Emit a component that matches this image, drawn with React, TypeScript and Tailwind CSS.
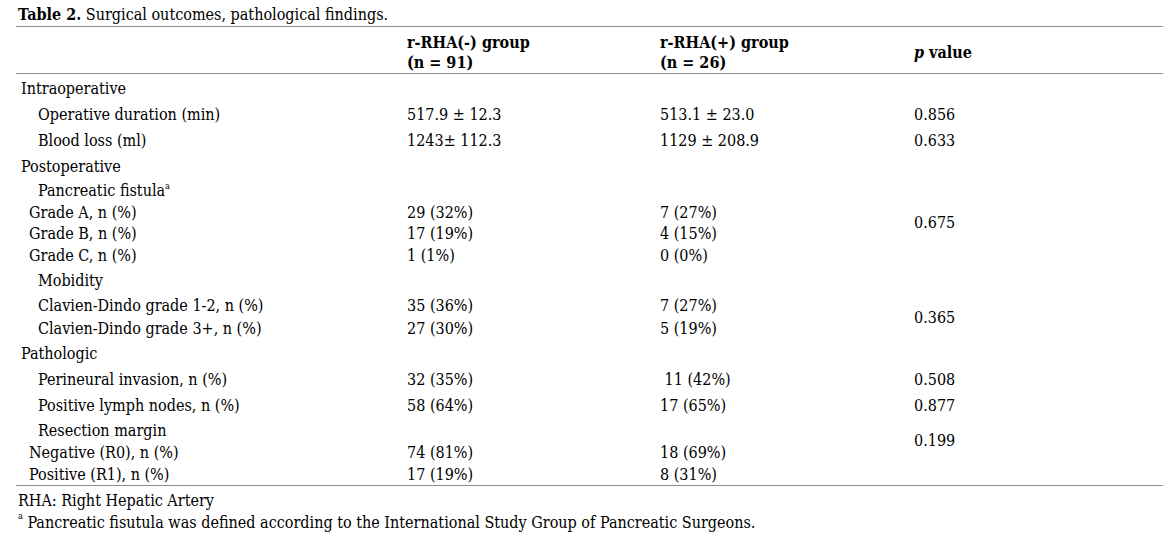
import React from "react";

type Indent = "cat" | "sub" | "grade";

interface Row {
  readonly label: React.ReactNode;
  readonly indent: Indent;
  readonly a?: string;
  readonly b?: string;
  readonly p?: string;
  readonly span?: boolean;
  readonly covered?: boolean;
}

const rows: Row[] = [
  { label: "Intraoperative", indent: "cat" },
  { label: "Operative duration (min)", indent: "sub", a: "517.9 ± 12.3", b: "513.1 ± 23.0", p: "0.856" },
  { label: "Blood loss (ml)", indent: "sub", a: "1243± 112.3", b: "1129 ± 208.9", p: "0.633" },
  { label: "Postoperative", indent: "cat" },
  {
    label: (
      <>
        Pancreatic fistula<sup className="text-[9px] align-[5px]">a</sup>
      </>
    ),
    indent: "sub",
  },
  { label: "Grade A, n (%)", indent: "grade", a: "29 (32%)", b: "7 (27%)", p: "0.675", span: true },
  { label: "Grade B, n (%)", indent: "grade", a: "17 (19%)", b: "4 (15%)", covered: true },
  { label: "Grade C, n (%)", indent: "grade", a: "1 (1%)", b: "0 (0%)" },
  { label: "Mobidity", indent: "sub" },
  { label: "Clavien-Dindo grade 1-2, n (%)", indent: "sub", a: "35 (36%)", b: "7 (27%)", p: "0.365", span: true },
  { label: "Clavien-Dindo grade 3+, n (%)", indent: "sub", a: "27 (30%)", b: "5 (19%)", covered: true },
  { label: "Pathologic", indent: "cat" },
  { label: "Perineural invasion, n (%)", indent: "sub", a: "32 (35%)", b: "\u00a011 (42%)", p: "0.508" },
  { label: "Positive lymph nodes, n (%)", indent: "sub", a: "58 (64%)", b: "17 (65%)", p: "0.877" },
  { label: "Resection margin", indent: "sub", p: "0.199", span: true },
  { label: "Negative (R0), n (%)", indent: "grade", a: "74 (81%)", b: "18 (69%)", covered: true },
  { label: "Positive (R1), n (%)", indent: "grade", a: "17 (19%)", b: "8 (31%)" },
];

const indentClass: Record<Indent, string> = {
  cat: "pl-[5px]",
  sub: "pl-[22px]",
  grade: "pl-[13px]",
};

function Cell({ children, className = "" }: { children?: React.ReactNode; className?: string }) {
  return <div className={`flex items-center whitespace-nowrap pt-[2px] ${className}`}>{children}</div>;
}

export default function App() {
  return (
    <div
      className="min-h-screen bg-white text-[16px] leading-[20px] text-black"
      style={{ fontFamily: '"DejaVu Serif Condensed", "DejaVu Serif", serif' }}
    >
      <div className="ml-[16px] w-[1147px]">
        <div className="flex h-[27px] items-center border-b border-[#909090] pl-[2px] pt-[3px]">
          <span className="font-bold">Table 2.</span>
          <span>&nbsp;Surgical outcomes, pathological findings.</span>
        </div>

        <div className="grid h-[47px] grid-cols-[391px_253px_254px_1fr] border-b border-[#909090] pt-[5px] font-bold">
          <div />
          <div className="flex flex-col justify-center">
            <span>r-RHA(-) group</span>
            <span>(n = 91)</span>
          </div>
          <div className="flex flex-col justify-center">
            <span>r-RHA(+) group</span>
            <span>(n = 26)</span>
          </div>
          <div className="flex items-center">
            <span>
              <i>p</i> value
            </span>
          </div>
        </div>

        <div className="grid grid-cols-[391px_253px_254px_1fr] grid-rows-[27px_26px_26px_25px_23px_21px_21px_24px_26px_23px_24px_26px_26px_26px_23px_21px_23px] border-b border-[#909090]">
          {rows.map((row, i) => (
            <React.Fragment key={i}>
              <Cell className={indentClass[row.indent]}>{row.label}</Cell>
              <Cell>{row.a}</Cell>
              <Cell>{row.b}</Cell>
              {row.covered ? null : <Cell className={row.span ? "row-span-2" : ""}>{row.p}</Cell>}
            </React.Fragment>
          ))}
        </div>

        <div className="pl-[2px] pt-[5px]">
          <p className="h-[22px]">RHA: Right Hepatic Artery</p>
          <p>
            <sup className="text-[9px] align-[5px]">a</sup> Pancreatic fisutula was defined according to the
            International Study Group of Pancreatic Surgeons.
          </p>
        </div>
      </div>
    </div>
  );
}
